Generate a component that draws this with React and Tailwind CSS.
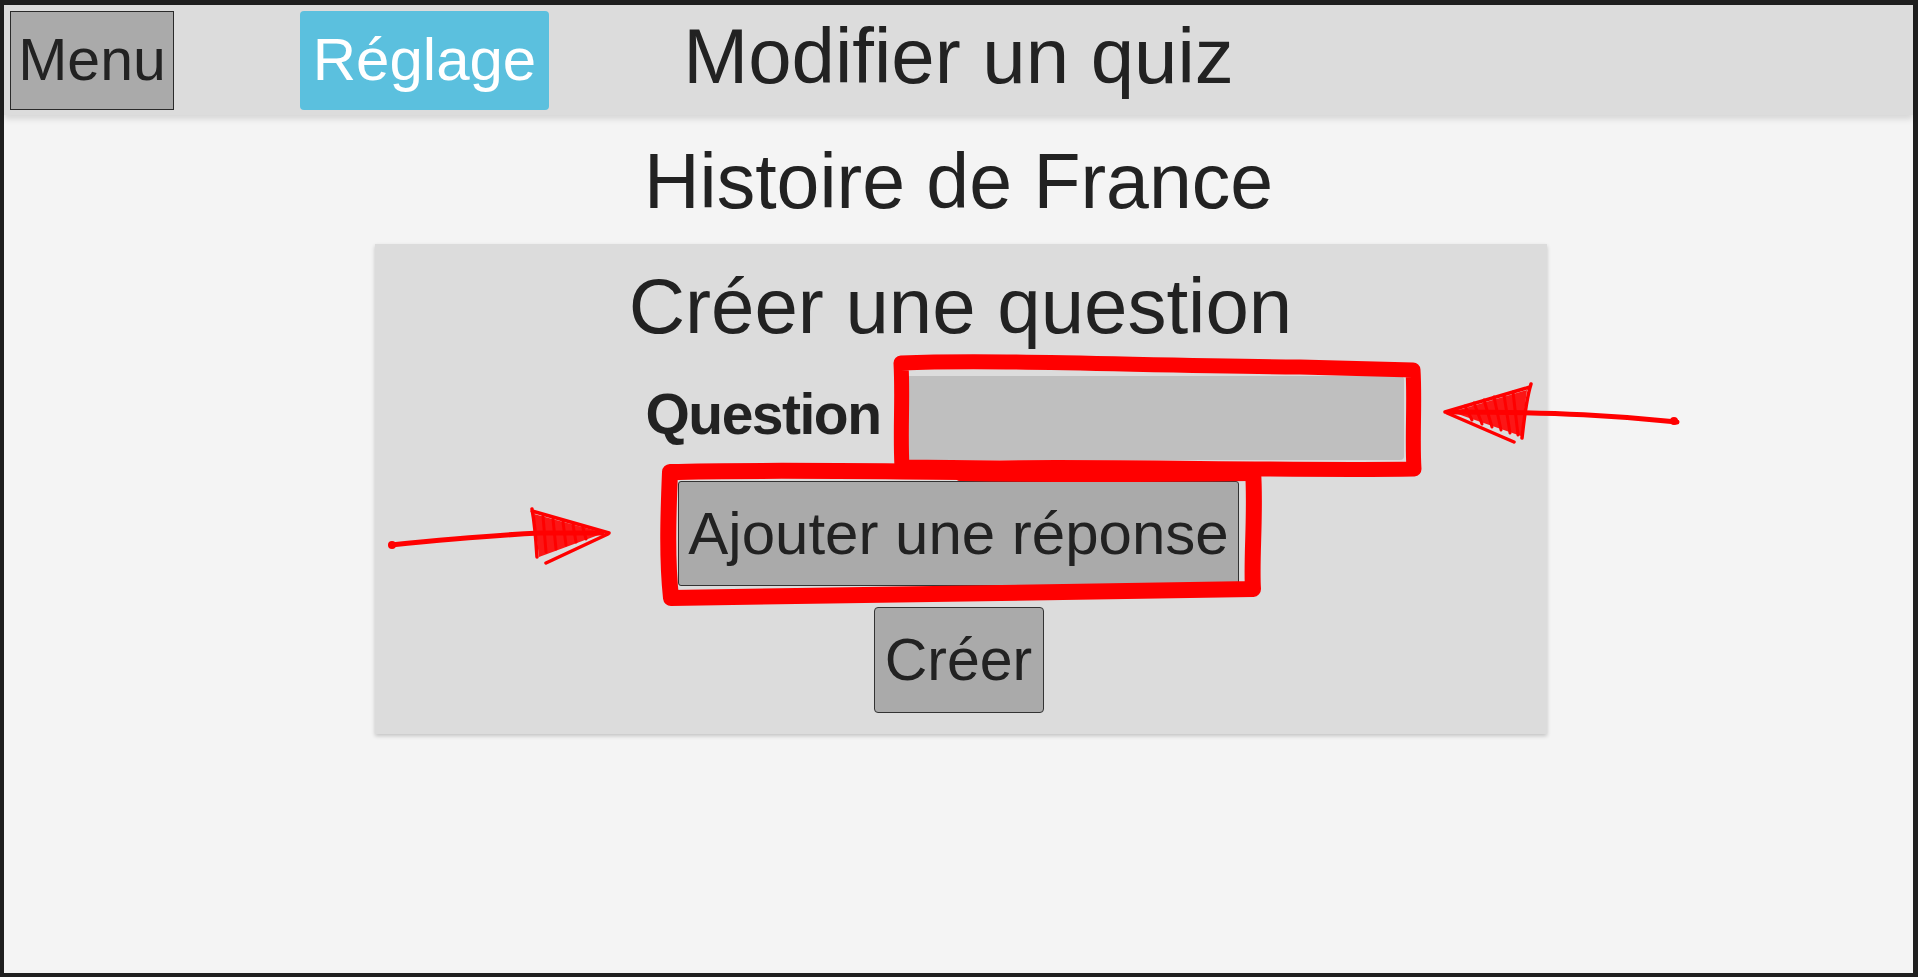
import React from 'react';

const Annotations = () => (
  <svg
    className="pointer-events-none absolute left-0 top-0 h-[977px] w-[1918px]"
    viewBox="0 0 1918 977"
    fill="none"
  >
    {/* around the question input */}
    <path
      d="M901 363 C1000 359 1150 366 1300 367 L1413 370 C1415 400 1412 440 1414 469 C1300 471 1100 466 1000 468 L902 467 C900 430 903 400 901 363 Z"
      stroke="#ff0000"
      strokeWidth="15"
      strokeLinejoin="round"
      strokeLinecap="round"
    />
    {/* around the add-answer button */}
    <path
      d="M670 472 C800 468 1000 475 1253 471 C1256 510 1251 560 1253 589 C1100 592 900 595 671 598 C667 560 668 520 670 472 Z"
      stroke="#ff0000"
      strokeWidth="16"
      strokeLinejoin="round"
      strokeLinecap="round"
    />
    <path d="M960 476 C1080 478 1180 477 1250 476" stroke="#ff0000" strokeWidth="10" strokeLinecap="round" />

    {/* right arrow pointing left */}
    <path d="M1677 422 C1620 416 1560 412 1452 412" stroke="#ff0000" strokeWidth="5" strokeLinecap="round" />
    <circle cx="1674" cy="421" r="4" fill="#ff0000" />
    <path d="M1445 412 L1530 387 M1447 413 L1514 442 M1531 384 C1526 400 1524 420 1522 438" stroke="#ff0000" strokeWidth="3.5" strokeLinecap="round" />
    <polygon points="1452,412 1527,390 1521,436" fill="#ff0000" fillOpacity="0.9" />
    <path
      d="M1465 406 L1472 420 M1474 403 L1482 424 M1484 400 L1492 427 M1494 397 L1501 430 M1504 395 L1510 433 M1513 392 L1518 435"
      stroke="#ff0000"
      strokeWidth="3"
      strokeLinecap="round"
    />

    {/* left arrow pointing right */}
    <path d="M391 545 C440 540 480 536 540 533 L602 533" stroke="#ff0000" strokeWidth="5" strokeLinecap="round" />
    <circle cx="392" cy="545" r="4" fill="#ff0000" />
    <path d="M609 533 L532 511 M608 534 L546 563 M532 509 C535 525 536 540 537 557" stroke="#ff0000" strokeWidth="3.5" strokeLinecap="round" />
    <polygon points="604,533 534,514 539,557" fill="#ff0000" fillOpacity="0.9" />
    <path
      d="M543 516 L546 552 M553 519 L556 549 M563 522 L566 545 M573 525 L576 542 M583 528 L586 539"
      stroke="#ff0000"
      strokeWidth="3"
      strokeLinecap="round"
    />
  </svg>
);

const App = () => {
  return (
    <div className="relative h-[977px] w-full font-['Liberation_Sans',Arial,sans-serif] text-[#222222]">
      <div className="flex h-full w-full flex-col border-b-4 border-l-4 border-r-[5px] border-t-[5px] border-[#1f1f1f] bg-[#f4f4f4]">
        <header className="relative z-10 grid h-[110px] shrink-0 grid-cols-[1fr_auto_1fr] items-center bg-[#dcdcdc] shadow-[0_4px_6px_rgba(0,0,0,0.12)]">
          <div className="flex items-center pl-[6px]">
            <button
              type="button"
              className="flex h-[99px] w-[164px] items-center justify-center border border-[#2a2a2a] bg-[#aaaaaa] text-[59px] leading-none"
            >
              Menu
            </button>
            <button
              type="button"
              className="ml-[126px] flex h-[99px] w-[249px] items-center justify-center rounded-[4px] bg-[#5bc0de] text-[60px] leading-none text-white"
            >
              Réglage
            </button>
          </div>
          <h1 className="-mt-2 whitespace-nowrap text-[78px] leading-none">Modifier un quiz</h1>
          <div />
        </header>

        <h2 className="mt-[28px] text-center text-[77px] leading-none">Histoire de France</h2>

        <section className="mx-auto mt-[24px] flex h-[490px] w-[1172px] translate-x-[2px] flex-col bg-[#dcdcdc] pt-[23px] shadow-[0_2px_4px_rgba(0,0,0,0.2)]">
          <h3 className="text-center text-[78px] leading-none">Créer une question</h3>

          <div className="mt-[31px] flex items-center pl-[271px]">
            <label className="mb-[8px] whitespace-nowrap text-[57px] font-bold leading-none tracking-[-1.5px]">Question</label>
            <input
              type="text"
              className="ml-[20px] h-[84px] w-[503px] rounded-[4px] bg-[#bfbfbf] outline-none"
            />
          </div>

          <button
            type="button"
            className="mx-auto mt-[21px] flex h-[105px] w-[561px] -translate-x-[2px] items-center justify-center whitespace-nowrap rounded-[3px] border border-[#333333] bg-[#aaaaaa] text-[60px] leading-none"
          >
            Ajouter une réponse
          </button>

          <button
            type="button"
            className="mx-auto mt-[21px] flex h-[106px] w-[170px] -translate-x-[2px] items-center justify-center rounded-[4px] border border-[#333333] bg-[#aaaaaa] text-[59px] leading-none"
          >
            Créer
          </button>
        </section>
      </div>
      <Annotations />
    </div>
  );
};

export default App;
